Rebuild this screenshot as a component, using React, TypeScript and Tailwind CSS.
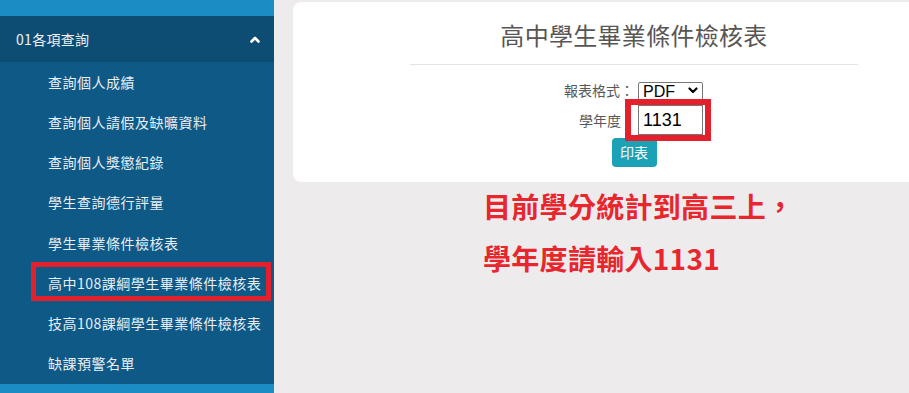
import React from "react";

const items = [
  "查詢個人成績",
  "查詢個人請假及缺曠資料",
  "查詢個人獎懲紀錄",
  "學生查詢德行評量",
  "學生畢業條件檢核表",
  "高中108課綱學生畢業條件檢核表",
  "技高108課綱學生畢業條件檢核表",
  "缺課預警名單",
];

const font = { fontFamily: '"Noto Sans CJK TC", "Noto Sans", sans-serif' };

export default function App() {
  return (
    <div
      className="flex w-[909px] h-[393px] overflow-hidden bg-[#edebec]"
      style={font}
    >
      <aside className="w-[274px] shrink-0 flex flex-col h-[393px]">
        <div className="h-[16px] bg-[#1b8cc4]" />
        <div className="h-[46px] bg-[#0e4d73] flex items-center justify-between pl-[16px] pr-[14px] text-[14px] text-[#eef2f5] tracking-[0.3px]">
          <span>01各項查詢</span>
          <svg width="10" height="7" viewBox="0 0 10 7">
            <polyline
              points="1.5,5.5 5,2 8.5,5.5"
              fill="none"
              stroke="#ffffff"
              strokeWidth="2.6"
              strokeLinecap="round"
              strokeLinejoin="round"
            />
          </svg>
        </div>
        <ul className="bg-[#0f5987] flex flex-col">
          {items.map((t, i) => (
            <li
              key={t}
              className="relative h-[40.25px] flex items-center pl-[48px] text-[14px] text-[#e9eef2] tracking-[0.5px]"
            >
              {t}
              {i === 5 && (
                <div className="absolute left-[31px] top-[-1px] w-[240px] h-[39px] border-[5px] border-[#e3202b]" />
              )}
            </li>
          ))}
        </ul>
        <div className="flex-1 bg-[#1b8cc4]" />
      </aside>

      <main className="flex-1 pl-[19px] pt-[2px]">
        <div className="relative w-[682px] h-[180px] bg-white rounded-lg flex flex-col items-center pt-[15px]">
          <h1 className="text-[24px] leading-[36px] text-[#585555] tracking-[0.3px]">
            高中學生畢業條件檢核表
          </h1>
          <div className="mt-[11px] w-[448px] h-px bg-[#e3e3e3]" />
          <div className="w-full mt-[16px] grid grid-cols-[345px_auto] gap-y-[5px] items-center text-[14px] text-[#595959]">
            <div className="text-right pr-[4px] leading-[19px]">報表格式：</div>
            <div className="relative w-[65px] h-[19px]">
              <select
                className="appearance-none w-[65px] h-[19px] border border-[#767676] rounded-[2px] bg-white pl-[4px] text-[16px] leading-[17px] text-black"
                style={{ fontFamily: '"Liberation Sans", Arial, sans-serif' }}
                defaultValue="PDF"
              >
                <option>PDF</option>
              </select>
              <svg
                className="absolute right-[5px] top-[6px] pointer-events-none"
                width="10"
                height="7"
                viewBox="0 0 10 7"
              >
                <polyline
                  points="1.5,1.5 5,5 8.5,1.5"
                  fill="none"
                  stroke="#000"
                  strokeWidth="2.2"
                  strokeLinecap="round"
                  strokeLinejoin="round"
                />
              </svg>
            </div>
            <div className="text-right pr-[17px] leading-[30px]">學年度</div>
            <input
              className="w-[65px] h-[30px] border border-[#767676] pl-[4px] text-[18px] text-black outline-none"
              style={{ fontFamily: '"Liberation Sans", Arial, sans-serif' }}
              defaultValue="1131"
            />
          </div>
          <button className="mt-[3px] w-[45px] h-[29px] rounded-[4px] bg-[#1ba2b7] text-white text-[14px]">
            印表
          </button>
          <div className="absolute left-[332px] top-[97px] w-[86px] h-[42px] border-[6px] border-[#e3202b]" />
        </div>
        <div className="mt-[-2px] pl-[190px] text-[28px] leading-[52px] font-bold text-[#e8262d] tracking-[0.3px]">
          <div>目前學分統計到高三上，</div>
          <div>學年度請輸入1131</div>
        </div>
      </main>
    </div>
  );
}
